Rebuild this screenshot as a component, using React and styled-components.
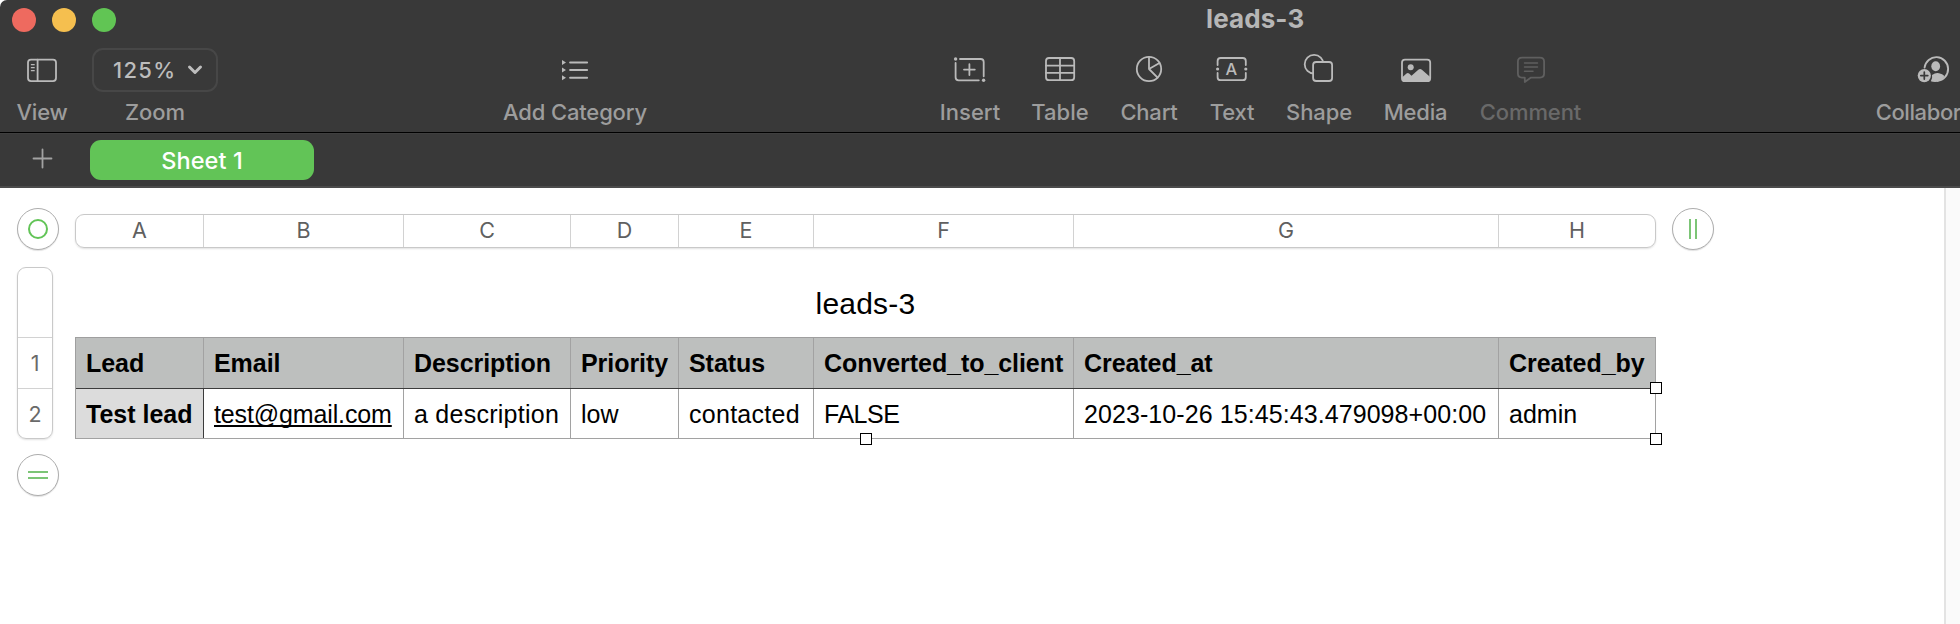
import React from "react";
import styled, { createGlobalStyle } from "styled-components";

const GlobalStyle = createGlobalStyle`
  html, body { margin: 0; padding: 0; background: #fff; }
  * { box-sizing: border-box; }
`;

const ui = `"Inter", "Liberation Sans", sans-serif`;
const doc = `"Liberation Sans", Arial, sans-serif`;

const Window = styled.div`
  width: 1960px;
  height: 624px;
  display: flex;
  flex-direction: column;
  overflow: hidden;
  background: #fff;
  font-family: ${ui};
`;

const Chrome = styled.header`
  height: 133px;
  flex: none;
  background: #393939;
  border-bottom: 1px solid #000;
  border-top-left-radius: 7px;
  overflow: hidden;
`;

const TitleBar = styled.div`
  height: 40px;
  display: flex;
  align-items: center;
  padding-left: 12px;
`;

const Lights = styled.div`
  display: flex;
  gap: 16px;
`;

const Light = styled.span`
  width: 24px;
  height: 24px;
  border-radius: 50%;
  background: ${(p) => p.$color};
`;

const WindowTitle = styled.div`
  margin-left: 1090px;
  font-size: 26px;
  line-height: 38px;
  height: 40px;
  font-weight: 700;
  letter-spacing: 0.1px;
  color: #b6b6b6;
`;

const Tools = styled.div`
  display: flex;
  padding: 8px 0 0 17px;
  color: #bababa;
`;

const ToolGroup = styled.div`
  display: flex;
  flex: none;
  gap: 32px;
  margin-left: ${(p) => p.$before}px;
`;

const Tool = styled.div`
  width: ${(p) => p.$width}px;
  flex: none;
  display: flex;
  flex-direction: column;
  align-items: center;
  color: ${(p) => (p.$disabled ? "#5f5f5f" : "inherit")};
`;

const ToolLabel = styled.span`
  font-size: 22px;
  line-height: 26px;
  margin-top: 7px;
  font-weight: 500;
  letter-spacing: ${(p) => p.$track ?? 0}px;
  white-space: nowrap;
  color: ${(p) => (p.$disabled ? "#696969" : "#9d9d9d")};
`;

const IconSvg = styled.svg`
  width: 36px;
  height: 44px;
  flex: none;
  overflow: visible;
  fill: none;
  stroke: currentColor;
  stroke-width: 1.8;
  stroke-linecap: round;
  stroke-linejoin: round;
`;

const ZoomBox = styled.div`
  width: 126px;
  height: 44px;
  border: 2px solid #474747;
  border-radius: 11px;
  display: flex;
  align-items: center;
  padding-left: 19px;
  gap: 11px;
  font-size: 22px;
  font-weight: 500;
  letter-spacing: 1.3px;
  color: #bdbdbd;
`;

const Chevron = styled.svg`
  width: 16px;
  height: 12px;
  fill: none;
  stroke: currentColor;
  stroke-width: 3;
  stroke-linecap: round;
  stroke-linejoin: round;
`;

const TabBar = styled.nav`
  height: 55px;
  flex: none;
  background: #393939;
  border-top: 1px solid #3f3f3f;
  border-bottom: 2px solid #4b4b4b;
  display: flex;
  align-items: flex-start;
  padding: 6px 0 0 32px;
`;

const AddSheet = styled.svg`
  width: 21px;
  height: 21px;
  margin: 8px 37px 0 0;
  stroke: #a2a2a2;
  stroke-width: 1.8;
  stroke-linecap: round;
`;

const SheetTab = styled.button`
  width: 224px;
  height: 40px;
  border: 0;
  padding: 1px 0 0;
  border-radius: 11px;
  background: #62c457;
  color: #fff;
  font: 500 23.5px/39px ${ui};
  letter-spacing: 0.1px;
`;

const Workspace = styled.main`
  flex: 1;
  display: flex;
`;

const Canvas = styled.section`
  flex: 1;
  padding: 19px 0 0 17px;
`;

const Gutter = styled.aside`
  width: 16px;
  background: #fafafa;
  border-left: 2px solid #e3e3e3;
`;

const TopRow = styled.div`
  display: flex;
  align-items: flex-start;
`;

const Handle = styled.button`
  width: 42px;
  height: 42px;
  flex: none;
  padding: 0;
  border: 1px solid #adadad;
  border-radius: 50%;
  background: #fff;
  box-shadow: 0 1px 1px rgba(0, 0, 0, 0.12);
  display: flex;
  align-items: center;
  justify-content: center;
  margin-top: ${(p) => p.$above ?? 1}px;
`;

const HandleGlyph = styled.svg`
  width: 20px;
  height: 20px;
  fill: none;
  stroke: #7cc576;
  stroke-width: 2;
`;

const ColumnBar = styled.div`
  height: 34px;
  display: flex;
  margin: 7px 16px 0 16px;
  border: 1px solid #c9c9c9;
  border-radius: 9px;
  box-shadow: 0 1px 2px rgba(0, 0, 0, 0.12);
`;

const ColumnLetter = styled.div`
  width: ${(p) => p.$width}px;
  border-right: 1px solid #d2d2d2;
  text-align: center;
  font-size: 21.5px;
  line-height: 31px;
  color: #606060;
  &:last-child { width: 156px; border-right: 0; }
`;

const BodyRow = styled.div`
  display: flex;
  margin-top: 17px;
`;

const RowBar = styled.div`
  width: 36px;
  height: 172px;
  border: 1px solid #c9c9c9;
  border-radius: 9px;
  box-shadow: 0 1px 2px rgba(0, 0, 0, 0.12);
`;

const RowNumber = styled.div`
  height: ${(p) => p.$height}px;
  border-bottom: 1px solid #d2d2d2;
  display: flex;
  align-items: center;
  justify-content: center;
  font-size: 21.5px;
  color: #6a6a6a;
  &:last-child { border-bottom: 0; }
`;

const TableBlock = styled.div`
  width: 1581px;
  margin-left: 22px;
`;

const TableTitle = styled.h1`
  margin: 0;
  height: 70px;
  padding-top: 19px;
  font: 400 30px/36px ${doc};
  letter-spacing: 0.2px;
  text-align: center;
  color: #000;
`;

const Table = styled.div`
  position: relative;
  border-left: 1px solid #9f9f9f;
  border-top: 1px solid #9f9f9f;
  font: 400 25px/50px ${doc};
  color: #000;
`;

const HeaderRow = styled.div`
  display: flex;
  height: 51px;
  background: #bdbfbe;
  border-bottom: 1px solid #3c3c3c;
  font-weight: 700;
`;

const DataRow = styled.div`
  display: flex;
  height: 50px;
  border-bottom: 1px solid #a2a2a2;
`;

const Cell = styled.div`
  width: ${(p) => p.$width}px;
  flex: none;
  padding-left: 10px;
  white-space: nowrap;
  letter-spacing: ${(p) => p.$track ?? 0}px;
  border-right: 1px solid ${(p) => (p.$rowHeader ? "#3c3c3c" : "#a2a2a2")};
  background: ${(p) => (p.$rowHeader ? "#dcdcdc" : "transparent")};
  font-weight: ${(p) => (p.$bold ? 700 : 400)};
`;

const MailLink = styled.span`
  text-decoration: underline;
  text-decoration-thickness: 1.5px;
  text-underline-offset: 2px;
  text-decoration-skip-ink: none;
`;

const Grip = styled.span`
  position: absolute;
  width: 12px;
  height: 12px;
  border: 1px solid #000;
  background: #fff;
  left: ${(p) => p.$x}px;
  top: ${(p) => p.$y}px;
`;

const Icon = ({ children }) => <IconSvg viewBox="-18 -22 36 44">{children}</IconSvg>;

const ViewIcon = () => (
  <Icon>
    <rect x="-14" y="-10.4" width="28" height="21.5" rx="3" />
    <path d="M-4.4-10.4V11" />
    <path d="M-10.6-5.3h2.8M-10.6-2.3h2.8M-10.6.7h2.8" strokeWidth="1.3" />
  </Icon>
);
const CategoryIcon = () => (
  <Icon>
    <path d="M-4.9-7.5h17M-4.9.1h17M-4.9 7.7h17" strokeWidth="2" />
    <path d="M-13-10l4 2.5-4 2.5zM-13-2.4l4 2.5-4 2.5zM-13 5.2l4 2.5-4 2.5z" fill="currentColor" stroke="none" />
  </Icon>
);
const InsertIcon = () => (
  <Icon>
    <path d="M-10-11H10.7q3 0 3 3V6.3M-14.4-7V7.3q0 3 3 3H8.8M-6-.4H4.800M-.6-5.8V5" />
    <circle cx="-14.4" cy="-11" r="1.7" fill="currentColor" stroke="none" />
    <circle cx="13.6" cy="10.2" r="1.7" fill="currentColor" stroke="none" />
  </Icon>
);
const TableIcon = () => (
  <Icon>
    <rect x="-14" y="-12" width="28.2" height="22.2" rx="3" />
    <path d="M0-12v22M-14-4.4h28M-14 2.9h28" />
  </Icon>
);
const ChartIcon = () => (
  <Icon>
    <circle cx="0" cy="-1" r="12.2" />
    <path d="M0-13.2V-1L10.5-7M0-1l8.6 8.7" />
  </Icon>
);
const TextIcon = () => (
  <Icon>
    <path d="M-14.4-5v-4q0-3 3-3H10.8q3 0 3 3v4M-14.4 3v4.2q0 3 3 3H10.8q3 0 3-3V3" />
    <circle cx="-14.4" cy="-1" r="1.6" fill="currentColor" stroke="none" />
    <circle cx="13.8" cy="-1" r="1.6" fill="currentColor" stroke="none" />
    <text x="-.6" y="5.2" textAnchor="middle" fontSize="16.5" fontWeight="500" fill="currentColor" stroke="none">A</text>
  </Icon>
);
const ShapeIcon = () => (
  <Icon>
    <circle cx="-4.9" cy="-5.8" r="9.4" />
    <rect x="-5.9" y="-8" width="19" height="19" rx="3" fill="#393939" />
  </Icon>
);
const MediaIcon = () => (
  <Icon>
    <rect x="-14" y="-10.4" width="28.2" height="21.6" rx="3" />
    <circle cx="-5.3" cy="-2.8" r="3" fill="currentColor" stroke="none" />
    <path d="M-14 7.5l4.500-4q1.300-1.200 2.600 0L-4.500 5.800 2.300-.3q1.800-1.500 3.600 0L14.200 7V9q0 2.200-2.200 2.200h-24q-2 0-2-2.200z" fill="currentColor" stroke="none" />
  </Icon>
);
const CommentIcon = () => (
  <Icon>
    <path d="M-9-12.4H9Q13.1-12.4 13.1-8.4V3.6Q13.1 7.6 9 7.6H0L-6.2 12V7.6H-9Q-13.1 7.6-13.1 3.6V-8.4Q-13.1-12.4-9-12.4Z" />
    <path d="M-6.5-7H6.5M-6.5-2.9H6.5M-6.5 1.3H2" strokeWidth="1.5" />
  </Icon>
);
const CollaborateIcon = () => (
  <Icon>
    <path d="M-9.400-2.500A11.800 11.800 0 1 1 3.500 10.700" strokeWidth="1.900" />
    <ellipse cx="1.700" cy="-3.800" rx="4.400" ry="5" fill="currentColor" stroke="none" />
    <path d="M-2 5Q1.700 2.400 5 3.200Q8.500 3.800 10.500 6Q6.500 12 1 12Q-1.500 12-3.200 11.200Q-1.200 8.500-2 5Z" fill="currentColor" stroke="none" />
    <circle cx="-9.700" cy="5.600" r="6.600" fill="currentColor" stroke="none" />
    <path d="M-13.200 5.600H-6.200M-9.700 2.100V9.100" stroke="#393939" strokeWidth="1.700" />
  </Icon>
);

const insertTools = [
  { label: "Insert", width: 60, icon: InsertIcon },
  { label: "Table", width: 56, icon: TableIcon },
  { label: "Chart", width: 58, track: -0.2, icon: ChartIcon },
  { label: "Text", width: 44, track: -0.2, icon: TextIcon },
  { label: "Shape", width: 66, track: -0.1, icon: ShapeIcon },
  { label: "Media", width: 63, track: -0.2, icon: MediaIcon },
  { label: "Comment", width: 103, track: -0.1, icon: CommentIcon, disabled: true },
];

const columns = [
  { letter: "A", width: 128, head: "Lead", value: "Test lead" },
  { letter: "B", width: 200, head: "Email", value: "test@gmail.com", track: -0.13, link: true },
  { letter: "C", width: 167, head: "Description", value: "a description", track: 0.26 },
  { letter: "D", width: 108, head: "Priority", value: "low" },
  { letter: "E", width: 135, head: "Status", value: "contacted", track: 0.28 },
  { letter: "F", width: 260, head: "Converted_to_client", value: "FALSE", track: -0.5 },
  { letter: "G", width: 425, head: "Created_at", value: "2023-10-26 15:45:43.479098+00:00", track: 0.08 },
  { letter: "H", width: 157, head: "Created_by", value: "admin" },
];

const ToolItem = ({ label, width, track, disabled, icon: Glyph }) => (
  <Tool $width={width} $disabled={disabled}>
    <Glyph />
    <ToolLabel $disabled={disabled} $track={track}>{label}</ToolLabel>
  </Tool>
);

export default function App() {
  return (
    <Window>
      <GlobalStyle />
      <Chrome>
        <TitleBar>
          <Lights>
            <Light $color="#ee6a5f" />
            <Light $color="#f5bf4f" />
            <Light $color="#61c554" />
          </Lights>
          <WindowTitle>leads-3</WindowTitle>
        </TitleBar>
        <Tools>
          <ToolItem label="View" width={50} track={-0.2} icon={ViewIcon} />
          <ToolGroup $before={25}>
            <Tool $width={126}>
              <ZoomBox>
                125%
                <Chevron viewBox="0 0 16 12"><path d="M2.5 3l5.5 5.5L13.5 3" /></Chevron>
              </ZoomBox>
              <ToolLabel>Zoom</ToolLabel>
            </Tool>
          </ToolGroup>
          <ToolGroup $before={285}>
            <ToolItem label="Add Category" width={144} track={-0.15} icon={CategoryIcon} />
          </ToolGroup>
          <ToolGroup $before={293}>
            {insertTools.map((t) => <ToolItem key={t.label} {...t} />)}
          </ToolGroup>
          <ToolGroup $before={294}>
            <ToolItem label="Collaborate" width={116} track={-0.4} icon={CollaborateIcon} />
          </ToolGroup>
        </Tools>
      </Chrome>
      <TabBar>
        <AddSheet viewBox="0 0 21 21"><path d="M10.5 1.5v18M1.5 10.5h18" /></AddSheet>
        <SheetTab>Sheet 1</SheetTab>
      </TabBar>
      <Workspace>
        <Canvas>
          <TopRow>
            <Handle><HandleGlyph viewBox="0 0 20 20"><circle cx="10" cy="10" r="9" stroke="#62c457" /></HandleGlyph></Handle>
            <ColumnBar>
              {columns.map((c) => <ColumnLetter key={c.letter} $width={c.width}>{c.letter}</ColumnLetter>)}
            </ColumnBar>
            <Handle><HandleGlyph viewBox="0 0 20 20"><path d="M7 0v20M13 0v20" /></HandleGlyph></Handle>
          </TopRow>
          <BodyRow>
            <RowBar>
              <RowNumber $height={70} />
              <RowNumber $height={51}>1</RowNumber>
              <RowNumber $height={49}>2</RowNumber>
            </RowBar>
            <TableBlock>
              <TableTitle>leads-3</TableTitle>
              <Table>
                <HeaderRow>
                  {columns.map((c) => <Cell key={c.letter} $width={c.width} $bold $track={-0.06}>{c.head}</Cell>)}
                </HeaderRow>
                <DataRow>
                  {columns.map((c, i) => (
                    <Cell key={c.letter} $width={c.width} $track={c.track} $bold={i === 0} $rowHeader={i === 0}>
                      {c.link ? <MailLink>{c.value}</MailLink> : c.value}
                    </Cell>
                  ))}
                </DataRow>
                <Grip $x={784} $y={95} />
                <Grip $x={1574} $y={44} />
                <Grip $x={1574} $y={95} />
              </Table>
            </TableBlock>
          </BodyRow>
          <Handle $above={15}><HandleGlyph viewBox="0 0 20 20"><path d="M0 7h20M0 13h20" /></HandleGlyph></Handle>
        </Canvas>
        <Gutter />
      </Workspace>
    </Window>
  );
}
